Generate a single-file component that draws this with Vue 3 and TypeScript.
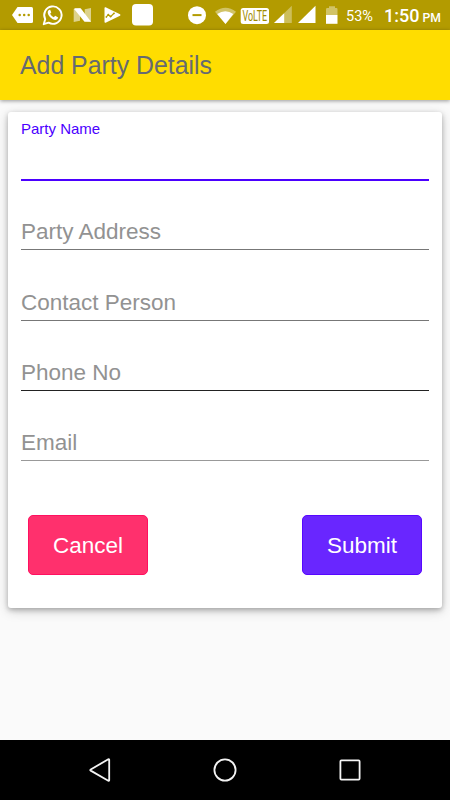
<script setup lang="ts">
import { ref } from 'vue'

interface Field {
  id: string
  label: string
  tone: string
}

const fields: Field[] = [
  { id: 'name', label: 'Party Name', tone: 'active' },
  { id: 'address', label: 'Party Address', tone: 'mid' },
  { id: 'contact', label: 'Contact Person', tone: 'mid' },
  { id: 'phone', label: 'Phone No', tone: 'dark' },
  { id: 'email', label: 'Email', tone: 'light' },
]

const values = ref<Record<string, string>>({})

function clear() {
  values.value = {}
}
</script>

<template>
  <div class="screen">
    <header class="status">
      <svg class="notifications" width="160" height="30" viewBox="0 0 160 30">
        <path d="M17.5 7H31.5Q33 7 33 8.5V21.5Q33 23 31.5 23H17.5L12 15Z" fill="#fff" />
        <g fill="#b39b00">
          <circle cx="19.7" cy="15" r="1.25" />
          <circle cx="24.2" cy="15" r="1.25" />
          <circle cx="28.7" cy="15" r="1.25" />
        </g>
        <path d="M43.7 24.2 45.2 19.2A8.7 8.7 0 1 1 48.6 22.7Z" fill="none" stroke="#fff" stroke-width="1.9" stroke-linejoin="round" />
        <path d="M49.5 9.7Q48 10.1 47.7 12C47.5 15.3 52 20 55.5 20Q57.7 19.8 58.2 17.4L55.2 15.8 53.8 17.3Q51.4 16.3 50.1 13.8L51.3 12.5 50.2 9.7Z" fill="#fff" />
        <path d="M73.7 9 80 8.2V20.8L73.7 22ZM84.7 9.2 91 8V21.8L84.7 21Z" fill="#fff" opacity=".55" />
        <path d="M74.5 8.2H80.7L91 21.8H84.5L74.5 9.5Z" fill="#fff" />
        <path d="M105.6 7.2 120 14.2Q121 15 120 15.8L105.6 22.8Q104.5 23 104.5 22V8Q104.5 7 105.6 7.2Z" fill="#fff" />
        <path d="M106 17.3 108.3 14.7 110.6 16.6 114 13.3" fill="none" stroke="#b39b00" stroke-width="1.2" />
        <g fill="#b39b00"><circle cx="106.3" cy="17" r=".8" /><circle cx="108.3" cy="14.7" r=".9" /><circle cx="110.6" cy="16.4" r=".9" /><circle cx="114" cy="13.3" r=".9" /></g>
        <rect x="132" y="4" width="21" height="21.5" rx="4" fill="#fff" />
      </svg>
      <svg class="signals" width="160" height="30" viewBox="180 0 160 30">
        <circle cx="197" cy="15.2" r="9" fill="#fff" />
        <rect x="192.5" y="14.1" width="9" height="2" fill="#b39b00" />
        <path d="M215 11.8Q225.5 3.7 236 11.8L225.5 24Z" fill="#fff" opacity=".4" />
        <path d="M217.2 14Q225.5 8.6 233.3 14L225.5 24Z" fill="#fff" />
        <rect x="240.7" y="8" width="28.3" height="16" rx="2.5" fill="#fff" />
        <text x="242.5" y="21" textLength="24.7" lengthAdjust="spacingAndGlyphs" class="volte">VoLTE</text>
        <path d="M291.8 5.8V23H274Z" fill="#fff" opacity=".35" />
        <path d="M284.2 13.2V23H274Z" fill="#fff" />
        <path d="M315.5 5.7V23H298Z" fill="#fff" />
        <path d="M326 9.2Q326 8 327.2 8H329V6.2H335V8H336.5Q337.5 8 337.5 9.2V15H326Z" fill="#fff" opacity=".4" />
        <path d="M326 15H337.5V23.8H326Z" fill="#fff" />
      </svg>
      <span class="battery">53%</span>
      <span class="clock">1:50<small>PM</small></span>
    </header>

    <div class="appbar"><h1>Add Party Details</h1></div>

    <main>
      <form class="card" @submit.prevent>
        <label v-for="field in fields" :key="field.id" class="field" :class="field.tone">
          <span>{{ field.label }}</span>
          <input v-model="values[field.id]" :aria-label="field.label" />
        </label>
        <div class="actions">
          <button type="button" class="cancel" @click="clear">Cancel</button>
          <button type="submit" class="submit">Submit</button>
        </div>
      </form>
    </main>

    <nav>
      <svg width="26" height="26" viewBox="0 0 26 26"><path d="M22.2 2.8V23.2Q22.2 24.2 21.3 23.7L3.7 13.6Q2.7 13 3.7 12.4L21.3 2.3Q22.2 1.8 22.2 2.8Z" /></svg>
      <svg width="26" height="26" viewBox="0 0 26 26"><circle cx="13" cy="13" r="10.6" /></svg>
      <svg width="26" height="26" viewBox="0 0 26 26"><rect x="3.4" y="3.4" width="19.2" height="19.2" rx="1" /></svg>
    </nav>
  </div>
</template>

<style>
body {
  margin: 0;
}
</style>

<style scoped>
.screen {
  box-sizing: border-box;
  display: flex;
  flex-direction: column;
  width: 450px;
  height: 800px;
  overflow: hidden;
  background: #fafafa;
  font-family: "Liberation Sans", Arial, sans-serif;
}
.status {
  display: flex;
  flex: none;
  align-items: center;
  height: 30px;
  background: #b39b00;
  color: #fff;
  font-family: Roboto, sans-serif;
}
.signals {
  margin-left: 20px;
}
.volte {
  font: 14px Roboto, sans-serif;
  fill: #a08b00;
}
.battery {
  width: 38px;
  padding-top: 3px;
  margin-left: 6px;
  font-size: 14.5px;
  line-height: 30px;
}
.clock {
  padding-top: 3px;
  font-size: 18px;
  font-weight: 500;
  line-height: 30px;
  white-space: nowrap;
}
.clock small {
  margin-left: 3px;
  font-size: 12.2px;
}
.appbar {
  position: relative;
  display: flex;
  flex: none;
  align-items: center;
  box-sizing: border-box;
  height: 70px;
  padding: 2px 0 0 20px;
  background: #ffdd00;
  box-shadow: 0 1px 4px rgba(0, 0, 0, 0.4);
}
h1 {
  margin: 0;
  color: #666a70;
  font-size: 24.85px;
  font-weight: 400;
  line-height: 30px;
}
main {
  flex: 1;
  padding: 12px 8px;
}
.card {
  box-sizing: border-box;
  width: 434px;
  height: 496px;
  padding: 0 13px;
  background: #fff;
  border-radius: 3px;
  box-shadow: 0 2px 5px rgba(0, 0, 0, 0.24), 0 3px 12px rgba(0, 0, 0, 0.18);
}
.field {
  display: flex;
  flex-direction: column;
  justify-content: flex-end;
  box-sizing: border-box;
  width: 408px;
  height: 70.33px;
  border-bottom: 1px solid #777;
  color: #929292;
  font-size: 22.5px;
}
.field span {
  line-height: 26px;
}
.field input {
  width: 100%;
  height: 4px;
  padding: 0;
  border: 0;
  outline: none;
  background: none;
  font: inherit;
}
.field.active {
  justify-content: flex-start;
  height: 69px;
  margin-bottom: -1px;
  border-bottom: 2px solid #4b00ff;
  color: #4b00ff;
  font-size: 15px;
}
.field.active span {
  padding-top: 7px;
  line-height: 19px;
}
.field.active input {
  height: 40px;
  font-size: 22.5px;
}
.field.dark {
  border-color: #222;
}
.field.light {
  border-color: #999;
}
.actions {
  display: flex;
  justify-content: space-between;
  padding: 54px 7px 0;
}
button {
  box-sizing: border-box;
  width: 120px;
  height: 60px;
  padding: 1px 0 0;
  border: 1px solid;
  border-radius: 5px;
  color: #fff;
  font: 22.5px "Liberation Sans", Arial, sans-serif;
}
.cancel {
  background: #ff306d;
  border-color: #ff1060;
}
.submit {
  background: #6926ff;
  border-color: #5707ff;
}
nav {
  display: flex;
  flex: none;
  align-items: center;
  justify-content: space-between;
  box-sizing: border-box;
  height: 60px;
  padding: 0 87px;
  background: #000;
}
nav svg {
  fill: none;
  stroke: #f3f3f3;
  stroke-width: 1.8;
}
</style>
